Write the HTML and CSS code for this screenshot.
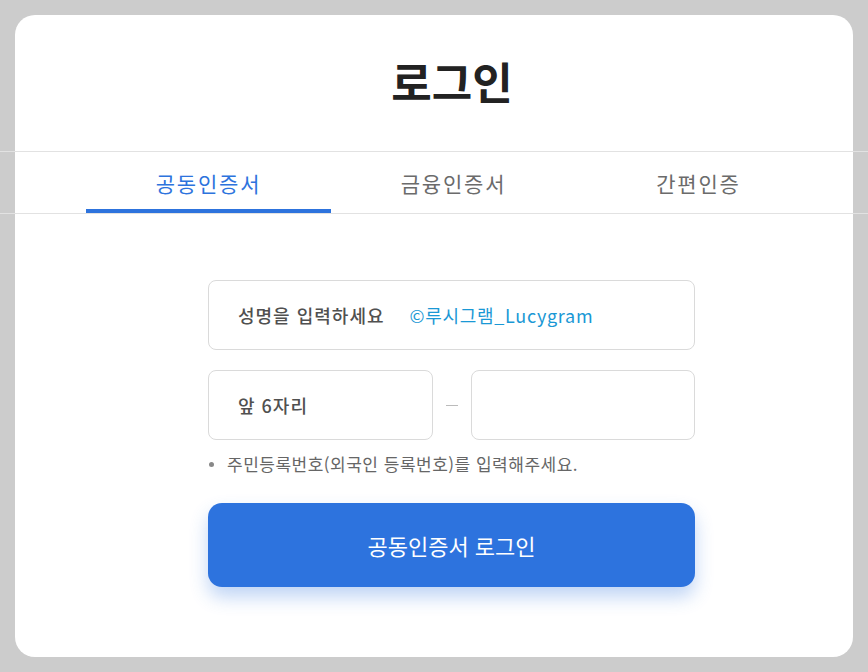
FILE: index.html
```html
<!DOCTYPE html>
<html lang="ko">

<head>
    <meta charset="utf-8">
    <meta name="viewport" content="width=device-width, initial-scale=1.0">
    <title>로그인</title>
    <link rel="stylesheet" href="styles.css">
</head>

<body>

    <div class="kort">
        <h1>로그인</h1>

        <div class="faner">
            <div class="fane valgt">공동인증서</div>
            <div class="fane">금융인증서</div>
            <div class="fane">간편인증</div>
        </div>

        <form class="formular">
            <div class="felt navn">
                <span class="label">성명을 입력하세요</span>
                <span class="maerke">©루시그램_Lucygram</span>
            </div>

            <div class="cpr">
                <div class="felt">
                    <span class="label">앞 6자리</span>
                </div>
                <span class="streg"></span>
                <div class="felt"></div>
            </div>

            <p class="note">주민등록번호(외국인 등록번호)를 입력해주세요.</p>

            <button type="button" class="login">공동인증서 로그인</button>
        </form>
    </div>

</body>

</html>
```

FILE: styles.css
```css
*,
body * {
    box-sizing: border-box;
}

body {
    margin: 0;
    padding: 0;
    background-color: #cccccc;
    font-family: "Noto Sans CJK KR", "Noto Sans", sans-serif;
    overflow: hidden;
}

.kort {
    margin: 15px;
    height: 642px;
    background-color: #fff;
    border-radius: 20px;
    padding-top: 42px;
}

h1 {
    margin: 0 0 46px 36px;
    font-size: 44px;
    line-height: 48px;
    font-weight: 700;
    text-align: center;
    color: #222;
}

.faner {
    display: flex;
    margin: 0 -15px;
    padding-left: 86px;
    border-top: 1px solid #e2e2e2;
    border-bottom: 1px solid #e2e2e2;
}

.fane {
    width: 245px;
    height: 61px;
    display: flex;
    align-items: center;
    justify-content: center;
    font-size: 21px;
    letter-spacing: 1.8px;
    color: #6b6b6b;
    border-bottom: 4px solid transparent;
    padding-top: 4px;
}

.fane.valgt {
    color: #2d73dd;
    border-bottom-color: #2d73dd;
}

.formular {
    width: 487px;
    margin: 66px 0 0 193px;
}

.felt {
    height: 70px;
    border: 1px solid #dadada;
    border-radius: 8px;
    display: flex;
    align-items: center;
    padding-left: 29px;
}

.label {
    font-size: 18px;
    letter-spacing: 1px;
    font-weight: 500;
    color: #505050;
}

.maerke {
    margin-left: 25px;
    font-size: 18px;
    letter-spacing: 0.7px;
    color: #1a98d5;
}

.cpr {
    display: grid;
    grid-template-columns: 1fr 38px 1fr;
    align-items: center;
    margin-top: 20px;
}

.streg {
    display: block;
    width: 12px;
    height: 1px;
    background-color: #bbb;
    margin: 0 auto;
}

.note {
    position: relative;
    margin: 14px 0 0;
    padding-left: 19px;
    font-size: 17px;
    letter-spacing: 0.5px;
    line-height: 20px;
    color: #666;
}

.note::before {
    content: "";
    position: absolute;
    left: 1px;
    top: 8px;
    width: 5px;
    height: 5px;
    border-radius: 50%;
    background-color: #888;
}

.login {
    display: block;
    width: 100%;
    height: 84px;
    margin-top: 29px;
    border: none;
    border-radius: 14px;
    background-color: #2d73de;
    color: #fff;
    font-family: inherit;
    font-size: 22px;
    box-shadow: 0 10px 18px rgba(45, 115, 222, 0.3);
    cursor: pointer;
}
```
